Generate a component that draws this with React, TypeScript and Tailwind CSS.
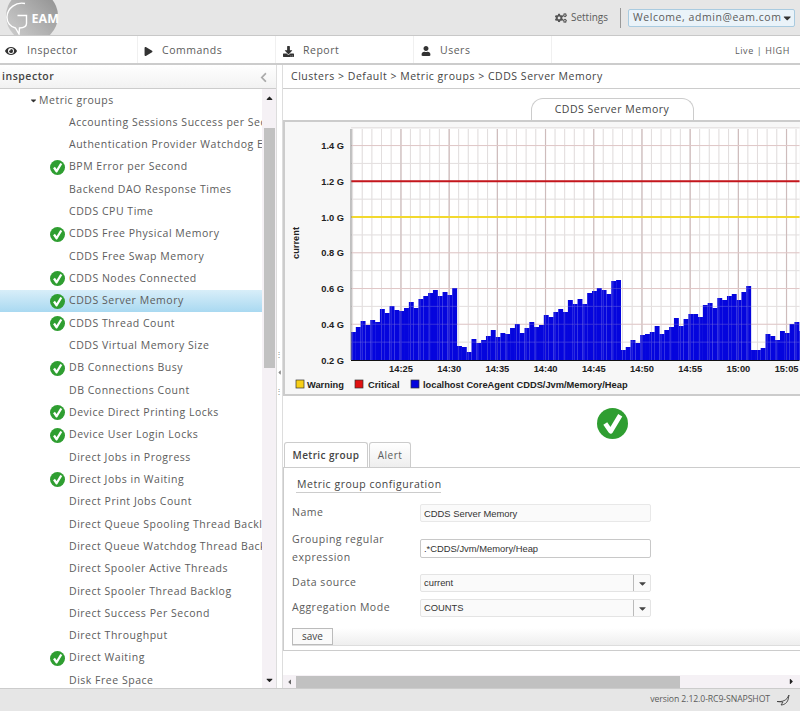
// App.tsx
// Tela do inspector: lista de métricas à esquerda, gráfico e configuração à direita

import { FaCaretDown, FaCaretLeft, FaCaretRight, FaCaretUp, FaChevronLeft, FaCogs, FaDownload, FaEye, FaPlay, FaUser } from 'react-icons/fa'

const METRICS: [string, boolean][] = [
  ['Accounting Sessions Success per Second', false],
  ['Authentication Provider Watchdog Errors', false],
  ['BPM Error per Second', true],
  ['Backend DAO Response Times', false],
  ['CDDS CPU Time', false],
  ['CDDS Free Physical Memory', true],
  ['CDDS Free Swap Memory', false],
  ['CDDS Nodes Connected', true],
  ['CDDS Server Memory', true],
  ['CDDS Thread Count', true],
  ['CDDS Virtual Memory Size', false],
  ['DB Connections Busy', true],
  ['DB Connections Count', false],
  ['Device Direct Printing Locks', true],
  ['Device User Login Locks', true],
  ['Direct Jobs in Progress', false],
  ['Direct Jobs in Waiting', true],
  ['Direct Print Jobs Count', false],
  ['Direct Queue Spooling Thread Backlog', false],
  ['Direct Queue Watchdog Thread Backlog', false],
  ['Direct Spooler Active Threads', false],
  ['Direct Spooler Thread Backlog', false],
  ['Direct Success Per Second', false],
  ['Direct Throughput', false],
  ['Direct Waiting', true],
  ['Disk Free Space', false],
]

// topo de cada barra, em px acima da base do gráfico
const BARS = [
  28, 33, 39, 35, 40, 38, 51, 47, 54, 50, 49, 52, 58, 52, 61, 64, 67, 70, 64, 68, 65, 72, 14, 13, 8, 21, 17, 20, 24, 30,
  23, 27, 26, 32, 36, 27, 32, 38, 33, 35, 45, 43, 48, 51, 48, 60, 56, 61, 56, 67, 69, 72, 70, 66, 79, 80, 10, 13, 20, 17,
  25, 26, 28, 34, 26, 30, 33, 42, 34, 41, 46, 46, 43, 55, 57, 52, 62, 60, 64, 66, 60, 68, 74, 10, 10, 12, 26, 24, 20, 29,
  27, 36, 38, 29,
]

const HOURS = ['14:25', '14:30', '14:35', '14:40', '14:45', '14:50', '14:55', '15:00', '15:05']
const VALUES = ['1.4 G', '1.2 G', '1.0 G', '0.8 G', '0.6 G', '0.4 G', '0.2 G']

function CheckIcon({ size }: { size: number }) {
  return (
    <svg width={size} height={size} viewBox="0 0 30 30" className="shrink-0">
      <circle cx="15" cy="15" r="15" fill="#2f9e31" />
      <path d="M8 15l5.2 7.5L22.5 7" fill="none" stroke="#fff" strokeWidth="4.6" strokeLinejoin="round" />
    </svg>
  )
}

function Logo() {
  return (
    <svg width="70" height="35" viewBox="0 0 70 35">
      <defs>
        <linearGradient id="silver" x1="0" y1="1" x2="1" y2="0">
          <stop offset="0" stopColor="#d2d2d2" />
          <stop offset="0.45" stopColor="#b4b4b4" />
          <stop offset="1" stopColor="#8c8c8c" />
        </linearGradient>
      </defs>
      <circle cx="32" cy="16" r="26" fill="url(#silver)" />
      <path
        d="M25 3.5C16 1.5 7.5 8 7 16.5c-.4 6 3.5 10.5 8.5 11.5l3.5 6 .5-6c5-.3 7-2 7-4.5V15.5h-9"
        fill="none"
        stroke="#fff"
        strokeWidth="1.4"
      />
      <text x="31.5" y="23" fill="#fff" fontSize="12.5" fontWeight="700" fontFamily="Open Sans" letterSpacing="0">
        EAM
      </text>
    </svg>
  )
}

function Chart() {
  const y = (v: number) => 360 - (v - 0.2) * 178.7
  const minorX = Array.from({ length: 47 }, (_, i) => 351.6 + i * 9.64)
  const majorX = HOURS.map((_, i) => 400 + i * 48.2)
  const minorY = [0.3, 0.5, 0.7, 0.9, 1.1, 1.3, 1.5].map(y)
  const majorY = [0.4, 0.6, 0.8, 1.0, 1.2, 1.4].map(y)

  const grid = (
    <>
      {minorX.map((x) => (
        <line key={x} x1={x} x2={x} y1="129" y2="360" stroke="#e2dede" />
      ))}
      {minorY.map((v) => (
        <line key={v} x1="350" x2="798.5" y1={v} y2={v} stroke="#e4e0e0" />
      ))}
      {majorX.map((x) => (
        <line key={x} x1={x} x2={x} y1="129" y2="360" stroke="#cdb9b9" />
      ))}
      {majorY.map((v) => (
        <line key={v} x1="350" x2="798.5" y1={v} y2={v} stroke="#e0c8c8" />
      ))}
    </>
  )

  return (
    <svg
      width="516"
      height="272"
      viewBox="284 122 516 272"
      fontFamily="Liberation Sans"
      fontWeight="700"
      fontSize="9.3"
      letterSpacing="0"
      className="block"
    >
      <rect x="284" y="122" width="516" height="272" fill="#f7f7f7" />
      <rect x="350" y="129" width="448.5" height="231" fill="#fff" />
      {grid}
      {BARS.map((h, i) => (
        <rect key={i} x={350 + i * 4.82} y={360 - h} width="4.9" height={h} fill="#0505dd" />
      ))}
      <g opacity="0.22">{grid}</g>
      <line x1="350" x2="798.5" y1={y(1.2)} y2={y(1.2)} stroke="#c4161c" strokeWidth="2" />
      <line x1="350" x2="798.5" y1={y(1.0)} y2={y(1.0)} stroke="#f2d92e" strokeWidth="2" />
      <line x1="350" x2="350" y1="129" y2="360" stroke="#888" />
      <line x1="350" x2="798.5" y1="360.5" y2="360.5" stroke="#111" />
      {VALUES.map((v, i) => (
        <text key={v} x="343" y={360 - (6 - i) * 35.74 + 3.5} textAnchor="end" fill="#222">
          {v}
        </text>
      ))}
      {HOURS.map((t, i) => (
        <text key={t} x={400 + i * 48.2} y="372" textAnchor="middle" fill="#222">
          {t}
        </text>
      ))}
      <text transform="translate(298 243) rotate(-90)" textAnchor="middle" fill="#222">
        current
      </text>
      <rect x="295" y="380" width="8" height="8" fill="#f7cf17" stroke="#333" strokeWidth="0.7" />
      <text x="306" y="388" fill="#222">Warning</text>
      <rect x="354" y="380" width="8" height="8" fill="#e01010" stroke="#333" strokeWidth="0.7" />
      <text x="367" y="388" fill="#222">Critical</text>
      <rect x="410" y="380" width="8" height="8" fill="#0505dd" stroke="#333" strokeWidth="0.7" />
      <text x="422" y="388" fill="#222">localhost CoreAgent CDDS/Jvm/Memory/Heap</text>
    </svg>
  )
}

function NavItem({ icon, label, iconClass }: { icon: React.ReactNode; label: string; iconClass: string }) {
  return (
    <div className="flex h-full w-[138px] items-center border-r border-[#f0f0f0] pt-[3px]">
      <span className={`flex justify-center text-[#333] ${iconClass}`}>{icon}</span>
      <span>{label}</span>
    </div>
  )
}

function ComboField({ value }: { value: string }) {
  return (
    <div className="flex h-[18px] w-[231px] items-center rounded-[2px] border border-[#e4e4e4] bg-[#fafafa] font-['Liberation_Sans',sans-serif] text-[9.4px] tracking-normal text-[#333]">
      <span className="flex-1 pl-[3px]">{value}</span>
      <span className="flex h-full w-[17px] items-center justify-center border-l border-[#bbb] text-[#444]">
        <FaCaretDown size={11} />
      </span>
    </div>
  )
}

export default function App() {
  return (
    <div className="flex h-[711px] w-[800px] flex-col overflow-hidden bg-white font-['Open_Sans',sans-serif] text-[10.5px] tracking-[0.52px] text-[#5c5c5c]">
      {/* Topo */}
      <header className="flex h-[36px] shrink-0 items-center justify-between border-b border-[#c8c8c8] bg-[#e6e6e6] pr-[5px]">
        <Logo />
        <div className="flex items-center">
          <FaCogs size={12} className="mr-[4px] text-[#555]" />
          <span className="text-[10px] tracking-normal">Settings</span>
          <span className="ml-[12px] mr-[7px] h-[20px] w-px bg-[#999]" />
          <div className="flex h-[18px] w-[167px] items-center justify-between whitespace-nowrap rounded-[2px] border border-[#a9cbe0] bg-[#eaf3f9] pl-[4px] pr-[2px] tracking-[0.55px]">
            <span>Welcome, admin@eam.com</span>
            <FaCaretDown size={12} className="text-[#333]" />
          </div>
        </div>
      </header>

      {/* Menu */}
      <nav className="flex h-[29px] shrink-0 items-center border-b-2 border-[#ccc]">
        <NavItem icon={<FaEye size={12} />} label="Inspector" iconClass="w-[27px] pr-[5px]" />
        <NavItem icon={<FaPlay size={9} />} label="Commands" iconClass="w-[24px] pr-[4px]" />
        <NavItem icon={<FaDownload size={11} />} label="Report" iconClass="w-[27px] pr-[3px]" />
        <NavItem icon={<FaUser size={10} />} label="Users" iconClass="w-[26px] pr-[2px]" />
        <div className="flex-1 pr-[10px] pt-[3px] text-right text-[9px] tracking-[0.6px]">Live | HIGH</div>
      </nav>

      <div className="flex min-h-0 flex-1">
        {/* Lista de métricas */}
        <aside className="flex w-[276px] shrink-0 flex-col">
          <div className="flex h-[24px] shrink-0 items-center justify-between border-b border-[#ccc] bg-gradient-to-b from-white to-[#f2f2f2] pl-[2px] pr-[7px] pt-[1px]">
            <span className="font-semibold text-[#444]">inspector</span>
            <FaChevronLeft size={11} className="text-[#aaa]" />
          </div>
          <div className="flex min-h-0 flex-1">
            <ul className="min-w-0 flex-1 overflow-hidden">
              <li className="flex h-[22.33px] items-center pl-[29px] pt-[1px]">
                <FaCaretDown size={9} className="mr-[1px] text-[#333]" />
                <span>Metric groups</span>
              </li>
              {METRICS.map(([name, ok]) => (
                <li
                  key={name}
                  className={`flex h-[22.33px] items-center whitespace-nowrap pl-[50px] ${
                    name === 'CDDS Server Memory' ? 'bg-gradient-to-b from-[#d8eef9] to-[#a9d9f1]' : ''
                  }`}
                >
                  <span className="w-[19px] shrink-0">{ok && <CheckIcon size={15} />}</span>
                  <span>{name}</span>
                </li>
              ))}
            </ul>
            <div className="flex w-[14px] shrink-0 flex-col items-center bg-[#f5f1f5] text-[#222]">
              <FaCaretUp size={9} className="mt-[4px] h-[10px]" />
              <div className="mt-[25px] h-[240px] w-[11px] bg-[#c1c1c1]" />
              <div className="flex-1" />
              <FaCaretDown size={9} className="mb-[3px] h-[10px]" />
            </div>
          </div>
        </aside>

        {/* Divisor */}
        <div className="flex w-[7px] shrink-0 flex-col items-center border-x border-[#ddd] pt-[285px] text-[#888]">
          <span className="text-[8px] leading-[8px]">⋮</span>
          <FaCaretLeft size={7} className="mt-[11px]" />
          <span className="mt-[11px] text-[8px] leading-[8px]">⋮</span>
        </div>

        {/* Detalhe */}
        <main className="flex min-w-0 flex-1 flex-col">
          <div className="flex h-[24px] shrink-0 items-center border-b border-[#ccc] pl-[8px] pt-[1px] text-[#444]">
            Clusters &gt; Default &gt; Metric groups &gt; CDDS Server Memory
          </div>
          <div className="min-h-0 flex-1 overflow-hidden">
            {/* conteúdo mais largo que a área visível, como na barra de rolagem */}
            <div className="w-[658px]">
              <div className="flex justify-center pt-[9px]">
                <div className="flex h-[22px] w-[163px] items-center justify-center rounded-t-[12px] border border-b-0 border-[#ccc] text-[#444]">
                  CDDS Server Memory
                </div>
              </div>
              <div className="w-[518px] border-y-2 border-l-2 border-[#ccc]">
                <Chart />
              </div>
              <div className="flex justify-center pt-[12px]">
                <CheckIcon size={31} />
              </div>

              <div className="mt-[3px] flex h-[26px] items-end border-b border-[#ccc]">
                <div className="ml-px flex h-[25px] w-[84px] items-center justify-center rounded-t-[3px] border border-b-0 border-[#ccc] text-[10px] font-semibold tracking-[0.4px] text-[#444]">
                  Metric group
                </div>
                <div className="ml-[1px] flex h-[25px] w-[42px] items-center justify-center rounded-t-[3px] border border-b-0 border-[#ccc] bg-gradient-to-b from-white to-[#eee] text-[10px]">
                  Alert
                </div>
              </div>

              <section className="h-[183px] border-b border-l border-[#ccc] pl-[8px] pr-[5px] pt-[9px]">
                <h3 className="ml-[4px] w-[145px] whitespace-nowrap border-b border-[#ccc] pl-[1px] text-[10.5px] font-medium leading-[15px] text-[#444]">
                  Metric group configuration
                </h3>
                <div className="mt-[11px] flex h-[18px] items-center">
                  <label className="w-[128px]">Name</label>
                  <input
                    readOnly
                    value="CDDS Server Memory"
                    className="h-[18px] w-[231px] rounded-[2px] border border-[#e8e8e8] bg-[#fafafa] pl-[3px] font-['Liberation_Sans',sans-serif] text-[9.4px] tracking-normal text-[#333] outline-none"
                  />
                </div>
                <div className="mt-[8px] flex items-center">
                  <label className="w-[128px] leading-[18px]">
                    Grouping regular
                    <br />
                    expression
                  </label>
                  <input
                    readOnly
                    value=".*CDDS/Jvm/Memory/Heap"
                    className="h-[19px] w-[231px] rounded-[2px] border border-[#c8c8c8] bg-white pl-[3px] font-['Liberation_Sans',sans-serif] text-[9.4px] tracking-normal text-[#333] outline-none"
                  />
                </div>
                <div className="mt-[8px] flex items-center">
                  <label className="w-[128px]">Data source</label>
                  <ComboField value="current" />
                </div>
                <div className="mt-[7px] flex items-center">
                  <label className="w-[128px]">Aggregation Mode</label>
                  <ComboField value="COUNTS" />
                </div>
                <div className="mt-[11px] flex h-[18px] items-start border-b border-[#ddd] bg-gradient-to-b from-white to-[#eee]">
                  <button className="h-[17px] w-[41px] border border-[#bbb] bg-[#fafafa] text-[10px] tracking-normal text-[#444]">
                    save
                  </button>
                </div>
              </section>
            </div>
          </div>

          {/* Barra de rolagem horizontal */}
          <div className="flex h-[13px] shrink-0 items-center bg-[#f5f1f5] text-[#666]">
            <FaCaretLeft size={8} className="w-[13px]" />
            <div className="h-[12px] w-[384px] bg-[#c1c1c1]" />
            <div className="flex-1" />
            <FaCaretRight size={9} className="mr-[2px] w-[13px] text-[#222]" />
          </div>
        </main>
      </div>

      {/* Rodapé */}
      <footer className="flex h-[23px] shrink-0 items-center justify-end gap-[6px] border-t border-[#ccc] bg-[#e6e6e6] pr-[10px] text-[8.7px] tracking-[-0.1px]">
        <span>version 2.12.0-RC9-SNAPSHOT</span>
        <svg width="14" height="12" viewBox="0 0 14 12">
          <path d="M1 7.5c4 .5 8-.5 10-3l2-3.5-1 5c-1 3-4 5-7 5l2-3-6-.5z" fill="none" stroke="#444" strokeWidth="0.9" />
        </svg>
      </footer>
    </div>
  )
}
